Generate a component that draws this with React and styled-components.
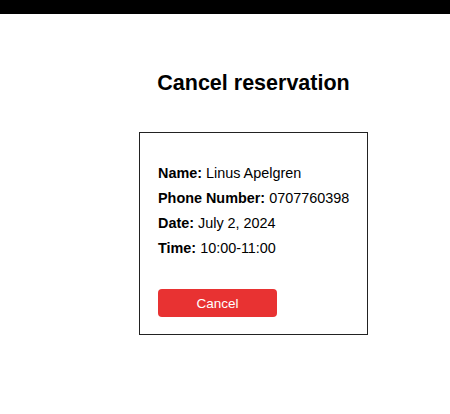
import styled, { createGlobalStyle } from "styled-components";

const GlobalStyle = createGlobalStyle`
  body {
    margin: 0;
    background: #fff;
    font-family: "Liberation Sans", Arial, sans-serif;
    color: #000;
  }
`;

const booking = [
  { label: "Name:", value: "Linus Apelgren" },
  { label: "Phone Number:", value: "0707760398" },
  { label: "Date:", value: "July 2, 2024" },
  { label: "Time:", value: "10:00-11:00" },
];

const App = () => {
  return (
    <>
      <GlobalStyle />
      <TopBar />
      <Page>
        <Title>Cancel reservation</Title>
        <Card>
          {booking.map((item) => (
            <InfoRow key={item.label}>
              <strong>{item.label}</strong> {item.value}
            </InfoRow>
          ))}
          <CancelButton type="button">Cancel</CancelButton>
        </Card>
      </Page>
    </>
  );
};

const TopBar = styled.header`
  height: 14px;
  background: #000;
`;

const Page = styled.main`
  display: flex;
  flex-direction: column;
  align-items: center;
  padding: 57px 0 40px 57px;
`;

const Title = styled.h1`
  margin: 0 0 37px;
  font-size: 21.5px;
  font-weight: 700;
  line-height: 24px;
`;

const Card = styled.section`
  display: flex;
  flex-direction: column;
  align-items: flex-start;
  gap: 9px;
  width: 229px;
  box-sizing: border-box;
  padding: 32px 18px 17px;
  border: 1px solid #222;
`;

const InfoRow = styled.p`
  margin: 0;
  font-size: 14.4px;
  line-height: 16px;
  white-space: nowrap;
  strong {
    font-weight: 700;
  }
`;

const CancelButton = styled.button`
  margin-top: 24px;
  width: 119px;
  height: 28px;
  border: none;
  border-radius: 4px;
  background: #e83232;
  color: #fff;
  font-family: "Liberation Sans", Arial, sans-serif;
  font-size: 13.5px;
  cursor: pointer;
`;

export default App;
